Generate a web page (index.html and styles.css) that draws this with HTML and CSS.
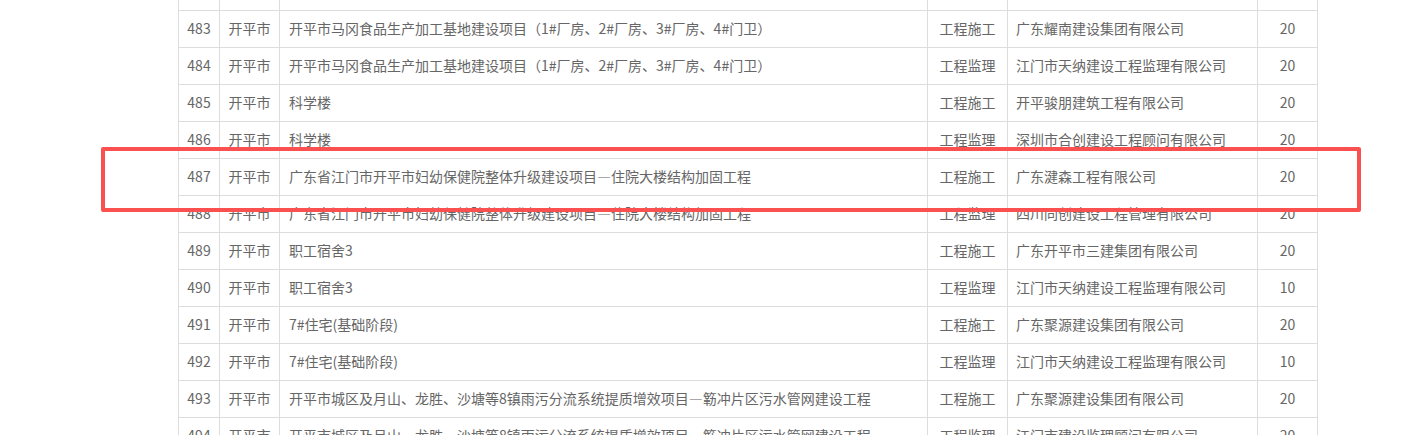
FILE: index.html
```html
<!DOCTYPE html>
<html lang="zh-CN">
<head>
    <meta charset="UTF-8">
    <title>项目列表</title>
    <link rel="stylesheet" href="styles.css">
</head>
<body>
    <div id="wrap">
        <table class="list">
            <tr><td>482</td><td>开平市</td><td class="name">开平市马冈食品生产加工基地建设项目</td><td>工程监理</td><td class="comp">江门市天纳建设工程监理有限公司</td><td>20</td></tr>
            <tr><td>483</td><td>开平市</td><td class="name">开平市马冈食品生产加工基地建设项目（1#厂房、2#厂房、3#厂房、4#门卫）</td><td>工程施工</td><td class="comp">广东耀南建设集团有限公司</td><td>20</td></tr>
            <tr><td>484</td><td>开平市</td><td class="name">开平市马冈食品生产加工基地建设项目（1#厂房、2#厂房、3#厂房、4#门卫）</td><td>工程监理</td><td class="comp">江门市天纳建设工程监理有限公司</td><td>20</td></tr>
            <tr><td>485</td><td>开平市</td><td class="name">科学楼</td><td>工程施工</td><td class="comp">开平骏朋建筑工程有限公司</td><td>20</td></tr>
            <tr><td>486</td><td>开平市</td><td class="name">科学楼</td><td>工程监理</td><td class="comp">深圳市合创建设工程顾问有限公司</td><td>20</td></tr>
            <tr><td>487</td><td>开平市</td><td class="name">广东省江门市开平市妇幼保健院整体升级建设项目—住院大楼结构加固工程</td><td>工程施工</td><td class="comp">广东湕森工程有限公司</td><td>20</td></tr>
            <tr><td>488</td><td>开平市</td><td class="name">广东省江门市开平市妇幼保健院整体升级建设项目—住院大楼结构加固工程</td><td>工程监理</td><td class="comp">四川同创建设工程管理有限公司</td><td>20</td></tr>
            <tr><td>489</td><td>开平市</td><td class="name">职工宿舍3</td><td>工程施工</td><td class="comp">广东开平市三建集团有限公司</td><td>20</td></tr>
            <tr><td>490</td><td>开平市</td><td class="name">职工宿舍3</td><td>工程监理</td><td class="comp">江门市天纳建设工程监理有限公司</td><td>10</td></tr>
            <tr><td>491</td><td>开平市</td><td class="name">7#住宅(基础阶段)</td><td>工程施工</td><td class="comp">广东聚源建设集团有限公司</td><td>20</td></tr>
            <tr><td>492</td><td>开平市</td><td class="name">7#住宅(基础阶段)</td><td>工程监理</td><td class="comp">江门市天纳建设工程监理有限公司</td><td>10</td></tr>
            <tr><td>493</td><td>开平市</td><td class="name">开平市城区及月山、龙胜、沙塘等8镇雨污分流系统提质增效项目—簕冲片区污水管网建设工程</td><td>工程施工</td><td class="comp">广东聚源建设集团有限公司</td><td>20</td></tr>
            <tr><td>494</td><td>开平市</td><td class="name">开平市城区及月山、龙胜、沙塘等8镇雨污分流系统提质增效项目—簕冲片区污水管网建设工程</td><td>工程监理</td><td class="comp">江门市建设监理顾问有限公司</td><td>20</td></tr>
        </table>
        <div class="mark"></div>
    </div>
</body>
</html>
```

FILE: styles.css
```css
*{margin: 0;padding: 0;}
html,body{background: #fff;}
body{font-size: 14px;font-family: "Noto Sans CJK SC", "Microsoft YaHei", sans-serif;color: #666;overflow: hidden;}
#wrap{position: relative;height: 435px;display: flow-root;overflow: hidden;}
.list{border-collapse: collapse;margin: -27px 0 0 178px;table-layout: fixed;}
.list td{height: 34px;padding-bottom: 2px;border: 1px solid #ddd;text-align: center;white-space: nowrap;overflow: hidden;line-height: 20px;}
.list td:nth-child(1){width: 40px;}
.list td:nth-child(2){width: 59px;}
.list td:nth-child(3){width: 638px;padding-left: 9px;text-align: left;}
.list td:nth-child(4){width: 79px;}
.list td:nth-child(5){width: 241px;padding-left: 8px;text-align: left;}
.list td:nth-child(6){width: 59px;}
.mark{position: absolute;left: 101px;top: 147px;width: 1252px;height: 57px;border: 4px solid #fa5050;border-radius: 2px;}
```
